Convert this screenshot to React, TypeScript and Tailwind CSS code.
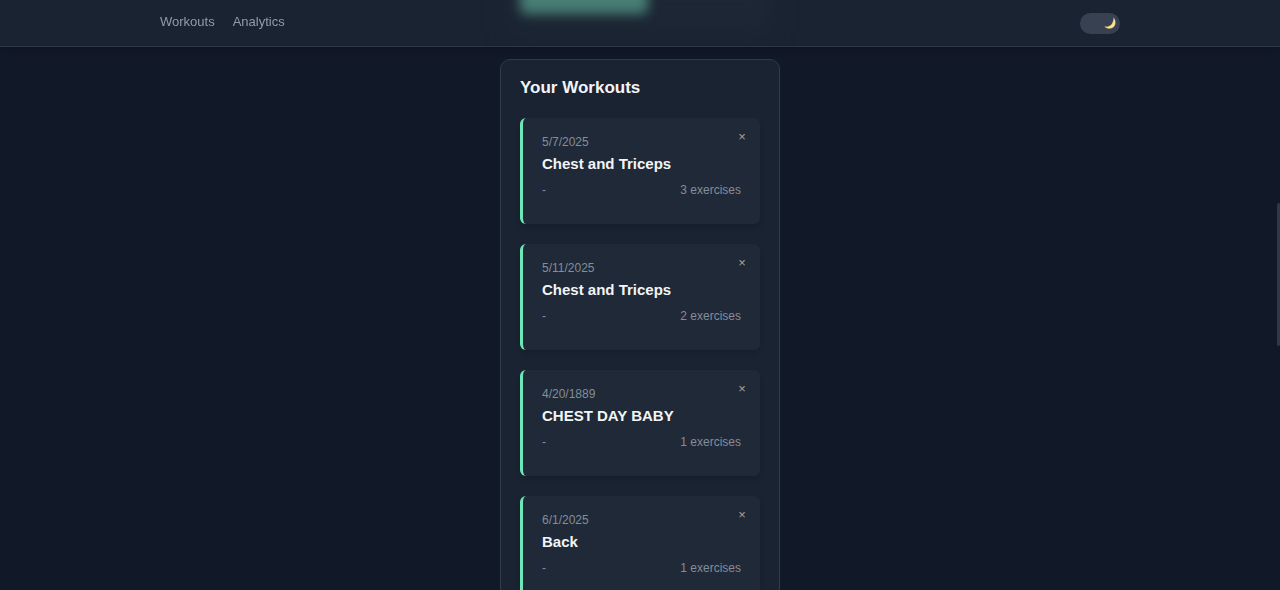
type Workout = { date: string; name: string; note: string; exercises: number };

const workouts: Workout[] = [
  { date: '5/7/2025', name: 'Chest and Triceps', note: '-', exercises: 3 },
  { date: '5/11/2025', name: 'Chest and Triceps', note: '-', exercises: 2 },
  { date: '4/20/1889', name: 'CHEST DAY BABY', note: '-', exercises: 1 },
  { date: '6/1/2025', name: 'Back', note: '-', exercises: 1 },
];

function MoonIcon() {
  return (
    <svg viewBox="0 0 12 12" className="h-3 w-3" aria-hidden="true">
      <path d="M9.3 0.3C12.6 3.6 12.1 9 8.3 11C5.4 12.5 1.6 11.7 0.3 9.3C3.3 10.1 6.2 9 7.8 6.7C9.2 4.7 9.6 2.4 9.3 0.3Z" fill="#e9c46b" />
      <path d="M10.1 2C12 5 11 9 7.8 10.4C6 11.2 3.6 11.1 2.2 10.3C5.2 10.4 7.7 9.1 9.1 6.6C9.9 5.1 10.2 3.6 10.1 2Z" fill="#fbe6a2" />
    </svg>
  );
}

function Header() {
  return (
    <header className="sticky top-0 z-10 overflow-hidden border-b border-[#2c3745] bg-[#1a2331] shadow-md">
      <div className="absolute -top-6 left-1/2 h-14 w-[264px] -translate-x-1/2 bg-[#1f2937]/60 blur-md" aria-hidden="true" />
      <div className="absolute inset-x-0 top-0 mx-auto flex w-[240px]" aria-hidden="true">
        <div className="-mt-6 h-[38px] w-32 rounded-md bg-[#477e75] blur-[6px]" />
      </div>
      <div className="relative mx-auto flex h-[46px] max-w-[960px] items-center justify-between">
        <nav className="flex gap-[18px] pb-[3px] text-[13px] leading-5 text-[#939ba8]">
          <a href="#workouts">Workouts</a>
          <a href="#analytics">Analytics</a>
        </nav>
        <button
          type="button"
          role="switch"
          aria-checked="true"
          aria-label="Dark mode"
          className="flex h-[21px] w-10 items-center justify-end rounded-full bg-[#374151] pr-1"
        >
          <MoonIcon />
        </button>
      </div>
    </header>
  );
}

function WorkoutCard({ workout }: { workout: Workout }) {
  return (
    <li className="relative h-[106px] rounded-md border-l-[3px] border-[#6ee7b7] bg-[#1f2937] pt-4 pr-[19px] pl-[19px] shadow-md">
      <p className="text-xs leading-4 text-[#858d9a]">{workout.date}</p>
      <h3 className="mt-1 text-[15px] leading-5 font-semibold text-[#f3f4f6]">{workout.name}</h3>
      <div className="mt-2 flex justify-between text-xs leading-4 text-[#858d9a]">
        <span>{workout.note}</span>
        <span>{workout.exercises} exercises</span>
      </div>
      <button
        type="button"
        aria-label={`Delete ${workout.name} ${workout.date}`}
        className="absolute top-2 right-2 flex h-5 w-5 items-center justify-center text-[13px] leading-none text-[#9ca3af]"
      >
        ×
      </button>
    </li>
  );
}

export default function App() {
  return (
    <div className="relative h-screen overflow-hidden bg-[#111827] font-['Liberation_Sans',Arial,sans-serif]">
      <Header />
      <main className="mx-auto max-w-[280px] pt-3">
        <section id="workouts" className="rounded-[10px] border border-[#303a48] bg-[#1a2331] px-[19px] pt-4 pb-5">
          <h2 className="text-[17px] leading-6 font-semibold text-[#f3f4f6]">Your Workouts</h2>
          <ul className="mt-[18px] flex flex-col gap-5">
            {workouts.map((workout) => (
              <WorkoutCard key={workout.date} workout={workout} />
            ))}
          </ul>
        </section>
      </main>
      {/* Scroll position indicator */}
      <div className="absolute top-[203px] right-0 h-[143px] w-[3px] rounded-full bg-[#303746]" aria-hidden="true" />
    </div>
  );
}
